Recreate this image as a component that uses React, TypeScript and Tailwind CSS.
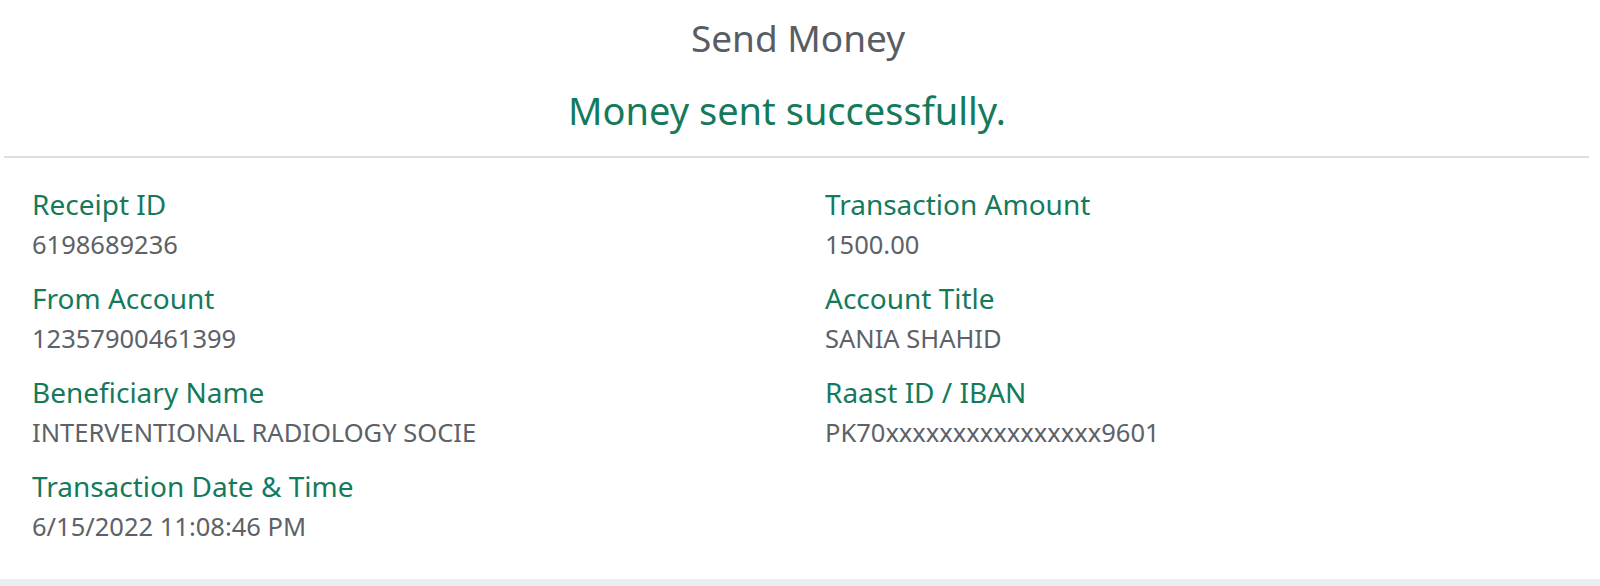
const rows: { label: string; value: string }[][] = [
  [
    { label: "Receipt ID", value: "6198689236" },
    { label: "Transaction Amount", value: "1500.00" },
  ],
  [
    { label: "From Account", value: "12357900461399" },
    { label: "Account Title", value: "SANIA SHAHID" },
  ],
  [
    { label: "Beneficiary Name", value: "INTERVENTIONAL RADIOLOGY SOCIE" },
    { label: "Raast ID / IBAN", value: "PK70xxxxxxxxxxxxxxxx9601" },
  ],
  [{ label: "Transaction Date & Time", value: "6/15/2022 11:08:46 PM" }],
];

function Field({ label, value }: { label: string; value: string }) {
  return (
    <div className="flex flex-col">
      <span className="text-[28px] leading-[40px] text-[#147a5b]">{label}</span>
      <span className="text-[25.5px] leading-[41px] text-[#5d6168]">{value}</span>
    </div>
  );
}

export default function App() {
  return (
    <div
      className="flex h-[586px] w-[1600px] flex-col bg-white"
      style={{ fontFamily: '"Noto Sans", "Open Sans", sans-serif' }}
    >
      <header className="flex flex-col items-center pt-[10px]">
        <h1 className="pr-[4px] text-[37px] leading-[56px] text-[#585d64]">Send Money</h1>
        <p className="mt-[16px] pr-[26px] text-[38px] leading-[56px] text-[#147a5b]">
          Money sent successfully.
        </p>
      </header>
      <div className="ml-[4px] mr-[11px] mt-[18px] h-[2px] bg-[#dedfe0]" />
      <div className="flex flex-1 flex-col gap-[13px] px-[32px] pt-[26px]">
        {rows.map((row, i) => (
          <div key={i} className="grid grid-cols-2 gap-x-[50px]">
            {row.map((f) => (
              <Field key={f.label} label={f.label} value={f.value} />
            ))}
          </div>
        ))}
      </div>
      <div className="h-[7px] bg-[#e9eef2]" />
    </div>
  );
}
